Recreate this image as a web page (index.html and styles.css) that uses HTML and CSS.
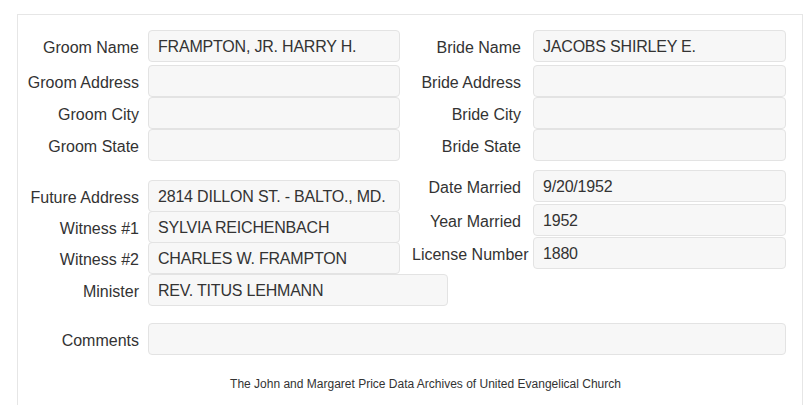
FILE: index.html
```html
<!DOCTYPE html>
<html lang="en">
<head>
    <meta charset="UTF-8">
    <meta name="viewport" content="width=device-width, initial-scale=1.0">
    <title>Marriage Record</title>
    <link rel="stylesheet" href="styles.css">
</head>
<body>
    <div class="record">
        <div class="pair top">
            <div class="half left">
                <label class="field-label">Groom Name</label>
                <div class="value">FRAMPTON, JR. HARRY H.</div>
                <label class="field-label">Groom Address</label>
                <div class="value"></div>
                <label class="field-label">Groom City</label>
                <div class="value"></div>
                <label class="field-label">Groom State</label>
                <div class="value"></div>
            </div>
            <div class="half right">
                <label class="field-label">Bride Name</label>
                <div class="value">JACOBS SHIRLEY E.</div>
                <label class="field-label">Bride Address</label>
                <div class="value"></div>
                <label class="field-label">Bride City</label>
                <div class="value"></div>
                <label class="field-label">Bride State</label>
                <div class="value"></div>
            </div>
        </div>

        <div class="pair details">
            <div class="half left">
                <label class="field-label">Future Address</label>
                <div class="value">2814 DILLON ST. - BALTO., MD.</div>
                <label class="field-label">Witness #1</label>
                <div class="value">SYLVIA REICHENBACH</div>
                <label class="field-label">Witness #2</label>
                <div class="value">CHARLES W. FRAMPTON</div>
                <label class="field-label">Minister</label>
                <div class="value wide">REV. TITUS LEHMANN</div>
            </div>
            <div class="half right">
                <label class="field-label">Date Married</label>
                <div class="value">9/20/1952</div>
                <label class="field-label">Year Married</label>
                <div class="value">1952</div>
                <label class="field-label">License Number</label>
                <div class="value">1880</div>
            </div>
        </div>

        <div class="comments">
            <label class="field-label">Comments</label>
            <div class="value"></div>
        </div>

        <p class="footer">The John and Margaret Price Data Archives of United Evangelical Church</p>
    </div>
</body>
</html>
```

FILE: styles.css
```css
body {
    font-family: "Liberation Sans", Arial, sans-serif;
    font-size: 16px;
    color: #333;
    background-color: #fff;
    margin: 0;
    padding: 0;
}
.record {
    margin: 14px 2px 0 17px;
    border: 1px solid #e6e6e6;
    border-bottom: none;
    padding-top: 15px;
    height: 400px;
    box-sizing: border-box;
}
.pair {
    display: grid;
    grid-template-columns: 382px 386px;
    align-items: start;
}
.half {
    display: grid;
    align-items: start;
}
.left {
    grid-template-columns: 121px 252px;
    column-gap: 9px;
}
.right {
    grid-template-columns: 109px 253px;
    column-gap: 12px;
    padding-left: 12px;
}
.field-label {
    text-align: right;
    white-space: nowrap;
    line-height: 32px;
    padding-top: 2px;
}
.value {
    height: 32px;
    line-height: 30px;
    box-sizing: border-box;
    padding: 1px 9px 0;
    background-color: #f7f7f7;
    border: 1px solid #e3e3e3;
    border-radius: 4px;
    white-space: nowrap;
    letter-spacing: -0.2px;
}
.wide {
    width: 300px;
}

/* groom / bride block */
.top .half {
    grid-template-rows: 35px 32px 32px 32px;
}

/* marriage details */
.details {
    margin-top: 9px;
}
.details .left {
    padding-top: 10px;
    grid-template-rows: 31px 31px 32px 32px;
}
.details .right {
    grid-template-rows: 34px 33px 32px;
}

.comments {
    display: grid;
    grid-template-columns: 121px 638px;
    column-gap: 9px;
    align-items: start;
    margin-top: 17px;
}

.footer {
    margin: 20px 0 0;
    padding-left: 31px;
    font-size: 12px;
    line-height: 14px;
    text-align: center;
}
```
